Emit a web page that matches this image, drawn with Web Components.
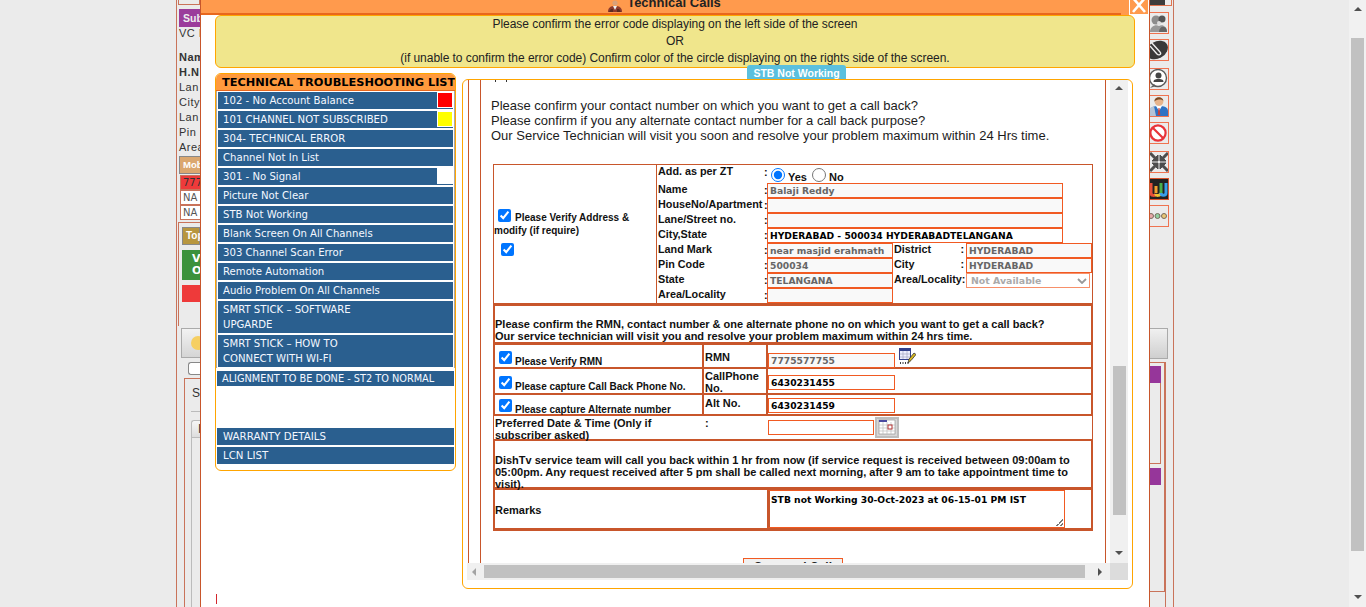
<!DOCTYPE html>
<html>
<head>
<meta charset="utf-8">
<title>Technical Calls</title>
<style>
    html, body { margin: 0; height: 100%; overflow: hidden; background: #ebebeb; }
</style>
</head>
<body>
<tech-page>
    <left-strip slot="left"></left-strip>
    <tech-modal slot="modal">
        <trouble-list slot="list">
            <trouble-item swatch="#ff0000">102 - No Account Balance</trouble-item>
            <trouble-item swatch="#ffff00">101 CHANNEL NOT SUBSCRIBED</trouble-item>
            <trouble-item>304- TECHNICAL ERROR</trouble-item>
            <trouble-item>Channel Not In List</trouble-item>
            <trouble-item swatch="#ffffff">301 - No Signal</trouble-item>
            <trouble-item>Picture Not Clear</trouble-item>
            <trouble-item>STB Not Working</trouble-item>
            <trouble-item>Blank Screen On All Channels</trouble-item>
            <trouble-item>303 Channel Scan Error</trouble-item>
            <trouble-item>Remote Automation</trouble-item>
            <trouble-item>Audio Problem On All Channels</trouble-item>
            <trouble-item>SMRT STICK – SOFTWARE<br>UPGARDE</trouble-item>
            <trouble-item>SMRT STICK – HOW TO<br>CONNECT WITH WI-FI</trouble-item>
        </trouble-list>
        <service-panel slot="panel"></service-panel>
    </tech-modal>
    <right-strip slot="right"></right-strip>
    <page-scrollbar slot="scroll"></page-scrollbar>
</tech-page>

<script>
const SANS = `"Liberation Sans", Arial, sans-serif`;
const WIDE = `"DejaVu Sans", Verdana, sans-serif`;
const LINE = "#c8562b";
const INPUT_LINE = "#f15a22";

class TechPage extends HTMLElement {
    constructor() {
        super();
        this.attachShadow({ mode: "open" });
        this.shadowRoot.innerHTML = `
            <style>
                :host {
                    display: flex;
                    width: 1366px;
                    height: 607px;
                    overflow: hidden;
                    background: #ebebeb;
                    padding-left: 176px;
                    box-sizing: border-box;
                }
                .gap { flex: 1; }
            </style>
            <slot name="left"></slot>
            <slot name="modal"></slot>
            <slot name="right"></slot>
            <div class="gap"></div>
            <slot name="scroll"></slot>
        `;
    }
}

class LeftStrip extends HTMLElement {
    constructor() {
        super();
        this.attachShadow({ mode: "open" });
        this.shadowRoot.innerHTML = `
            <style>
                :host {
                    display: block;
                    width: 24px;
                    height: 607px;
                    box-sizing: border-box;
                    border-left: 1px solid #c9735a;
                    overflow: hidden;
                    font: 11px/15px ${SANS};
                    color: #333;
                    white-space: nowrap;
                }
                .top { height: 5px; border: 1px solid #c9735a; border-top: 0; box-sizing: border-box; margin-left: 1px; }
                .sub { margin: 4px 0 0 2px; height: 18px; background: #9b3c9b; color: #eee; font-weight: bold; font-size: 10.500px; line-height: 18px; padding-left: 4px; }
                .info { padding-left: 2px; letter-spacing: .5px; margin-top: -1px; }
                .info div { height: 15px; }
                .b { font-weight: bold; }
                .mob { margin: 1px 0 0 2px; height: 18px; background: #dba76e; border: 1px solid #888; border-right: 0; box-sizing: border-box; color: #fff; font-size: 9.500px; font-weight: bold; padding-left: 3px; }
                .cell { margin: 1px 0 -1px 3px; height: 15px; box-sizing: border-box; border: 1px solid #c9735a; border-right: 0; font: 10px/13px ${WIDE}; padding-left: 2px; color: #555; background: #fff; }
                .cell.red { background: #ee3a3a; color: #333; }
                .box { margin: 3px 0 0 1px; height: 104px; border-left: 1px solid #c9735a; border-top: 1px solid #c9735a; padding: 4px 0 0 3px; box-sizing: border-box; }
                .tan { height: 18px; background: #b8963e; border: 1px solid #888; box-sizing: border-box; color: #fff; font: bold 10px/16px ${SANS}; padding-left: 3px; }
                .green { margin-top: 5px; height: 30px; background: #3c923c; color: #fff; font: bold 11px/12px ${WIDE}; padding: 3px 0 0 10px; box-sizing: border-box; }
                .redbar { margin-top: 5px; height: 17px; background: #ee3a3a; }
                .smile { margin: 2px 0 0 4px; height: 30px; border: 1px solid #aaa; border-right: 0; background: linear-gradient(#f2f2f2, #d5d5d5); box-sizing: border-box; padding: 7px 0 0 9px; }
                .smile i { display: block; width: 14px; height: 14px; border-radius: 50%; background: #f6cf62; }
                .tick { margin: 4px 0 0 11px; height: 13px; border: 1px solid #888; border-right: 0; border-radius: 3px 0 0 3px; background: #fff; box-sizing: border-box; }
                .panel { margin: 3px 0 0 7px; height: 240px; border: 1px solid #c9735a; border-right: 0; padding: 7px 0 0 7px; box-sizing: border-box; font-size: 12px; }
                .panel hr { margin: 10px 0 0 -1px; border: 0; border-top: 1px solid #bbb; }
                .tab { margin: 8px 0 0 -1px; height: 18px; border: 1px solid #bbb; border-right: 0; border-radius: 3px 0 0 0; background: linear-gradient(#f6f6f6, #ddd); font-size: 12px; line-height: 17px; padding-left: 6px; box-sizing: border-box; }
                .tabbody { margin-left: -1px; height: 180px; border-left: 1px solid #bbb; }
            </style>
            <div class="top"></div>
            <div class="sub">Sub</div>
            <div class="info">
                <div style="margin-bottom: 9px">VC I</div>
                <div class="b">Nam</div>
                <div class="b">H.N</div>
                <div>Lan</div>
                <div>City</div>
                <div>Lan</div>
                <div>Pin</div>
                <div>Area</div>
            </div>
            <div class="mob">Mob</div>
            <div class="cell red">777</div>
            <div class="cell">NA</div>
            <div class="cell">NA</div>
            <div class="box">
                <div class="tan">Top</div>
                <div class="green">V<br>O</div>
                <div class="redbar"></div>
            </div>
            <div class="smile"><i></i></div>
            <div class="tick"></div>
            <div class="panel">S<hr><div class="tab">I</div><div class="tabbody"></div></div>
        `;
    }
}

class RightStrip extends HTMLElement {
    constructor() {
        super();
        this.attachShadow({ mode: "open" });
        this.shadowRoot.innerHTML = `
            <style>
                :host {
                    display: block;
                    width: 24px;
                    height: 607px;
                    box-sizing: border-box;
                    border-right: 1px solid #c9735a;
                    overflow: hidden;
                }
                .top { height: 6px; width: 22px; background: linear-gradient(90deg, #3c3c3c 15px, #ebebeb 15px); border: 1px solid #e0734e; border-width: 0 1px 1px 0; box-sizing: border-box; }
                .ico { width: 19px; height: 22px; box-sizing: border-box; border: 1px solid #ef7350; border-left: 0; margin-top: 5px; overflow: hidden; }
                .ico svg { display: block; width: 18px; height: 20px; filter: blur(.3px); }
                .btn { margin-top: 101px; width: 18px; height: 31px; box-sizing: border-box; border: 1px solid #aaa; border-left: 0; background: linear-gradient(#f0f0f0, #cfcfcf); }
                .wrap { margin-top: 3px; width: 16px; height: 230px; box-sizing: border-box; border: 1px solid #c9735a; border-width: 1px 2px 1px 0; padding-top: 3px; }
                .purple { width: 11px; height: 17px; background: #96369a; }
                .out { width: 11px; height: 81px; box-sizing: border-box; border: 1px solid #c9735a; border-left: 0; border-top: 0; }
                .stem { width: 16px; height: 15px; border-right: 1px solid #c9735a; box-sizing: border-box; }
            </style>
            <div class="top"></div>
            <div class="ico" style="margin-top: 6px">
                <svg viewBox="0 0 18 20"><circle cx="6" cy="7" r="4.500" fill="#8d8d8d"/><circle cx="12" cy="6" r="3.500" fill="#555"/><circle cx="9" cy="10" r="2" fill="#ddd"/><path d="M0 19c0-6 6-8 9-6 3-2 8 0 8 6z" fill="#999"/><path d="M9 19c0-4 3-6 5-5 2 0 3 2 3 5z" fill="#666"/></svg>
            </div>
            <div class="ico">
                <svg viewBox="0 0 18 20"><ellipse cx="7" cy="10" rx="11.500" ry="8.500" fill="#3a3a3a" transform="rotate(-30 7 10)"/><path d="M1 2l9 10c2 2-1 4-3 2L0 6" fill="none" stroke="#eee" stroke-width="1.400"/></svg>
            </div>
            <div class="ico" style="margin-top: 7px">
                <svg viewBox="0 0 18 20"><circle cx="8" cy="9" r="8.500" fill="#fff" stroke="#5a5a5a" stroke-width="1.400"/><path d="M0 19l4-4 2 2z" fill="#5a5a5a"/><circle cx="8.500" cy="6.500" r="3" fill="#444"/><path d="M3.500 13c0-3 3-3 5-3s5 0 5 3z" fill="#444"/></svg>
            </div>
            <div class="ico">
                <svg viewBox="0 0 18 20"><path d="M0 20v-5c0-4 4-5 9-5s9 1 9 5v5z" fill="#2f72c4"/><path d="M0 20v-8l4-2 2 10z" fill="#b5c4d6"/><path d="M6 10h6l-3 5z" fill="#fff"/><path d="M8.500 12h1l.8 7h-2.600z" fill="#c9403a"/><circle cx="9" cy="5.500" r="4.400" fill="#e8b48c"/><path d="M4.400 5.500c-.6-5 8.400-6 9-.5-2-2-6-2-9 .5z" fill="#7a4a24"/></svg>
            </div>
            <div class="ico">
                <svg viewBox="0 0 18 20"><circle cx="8" cy="10" r="7.600" fill="#fff" stroke="#e8343a" stroke-width="2.200"/><path d="M2.500 4.500l11 11" stroke="#e8343a" stroke-width="2.200"/></svg>
            </div>
            <div class="ico" style="margin-top: 7px">
                <svg viewBox="0 0 18 20" fill="#4d4d4d" stroke="#4d4d4d"><path d="M8 9H2l6-6zM10 9h6l-6-6zM8 11H2l6 6zM10 11h6l-6 6z"/><path d="M0 1l5 5M18 1l-5 5M0 19l5-5M18 19l-5-5" stroke-width="3"/></svg>
            </div>
            <div class="ico" style="border-color: #d9532c; background: #222">
                <svg viewBox="0 0 18 20" fill="none" stroke-width="3"><path d="M1 4v10c0 3 4 3 5 1" stroke="#e8503a"/><path d="M5.500 15c.5 2 5 2 5.500-1" stroke="#f2c230"/><path d="M6 14V7" stroke="#f2a030"/><path d="M11 14V4" stroke="#4ab04a"/><path d="M11 14c0 3 5 3 5 0V4" stroke="#3a9ee8"/></svg>
            </div>
            <div class="ico">
                <svg viewBox="0 0 18 20" fill="none" stroke="#7a6a5a" stroke-width="1"><circle cx="1" cy="10" r="2.500" fill="#e8a8a8"/><circle cx="7.500" cy="10" r="2.500" fill="#8fd0a0"/><circle cx="14" cy="10" r="2.500" fill="#e8c878"/></svg>
            </div>
            <div class="btn"></div>
            <div class="wrap">
                <div class="purple"></div>
                <div class="out"></div>
                <div class="purple" style="margin-top: 4px"></div>
            </div>
            <div class="stem"></div>
        `;
    }
}

class PageScrollbar extends HTMLElement {
    constructor() {
        super();
        this.attachShadow({ mode: "open" });
        this.shadowRoot.innerHTML = `
            <style>
                :host {
                    display: flex;
                    flex-direction: column;
                    align-items: center;
                    width: 17px;
                    height: 607px;
                    background: #f1f1f1;
                }
                .up, .down { width: 0; height: 0; border: 4px solid transparent; }
                .up { border-top: 0; border-bottom: 4px solid #505050; margin-top: 7px; }
                .down { border-bottom: 0; border-top: 4px solid #505050; margin-top: 44px; }
                .thumb { width: 13px; height: 513px; background: #c1c1c1; margin: 27px 0 0 0; }
            </style>
            <div class="up"></div>
            <div class="thumb"></div>
            <div class="down"></div>
        `;
    }
}

class TechModal extends HTMLElement {
    constructor() {
        super();
        this.attachShadow({ mode: "open" });
        this.shadowRoot.innerHTML = `
            <style>
                :host {
                    display: block;
                    width: 950px;
                    height: 607px;
                    box-sizing: border-box;
                    background: #fff;
                    border: 1px solid ${LINE};
                    border-width: 0 1px;
                    overflow: hidden;
                    position: relative;
                }
                header {
                    display: flex;
                    height: 15px;
                    background: #ff9a4d;
                }
                .bar {
                    flex: 1;
                    margin-right: 8px;
                    border-bottom: 2px solid #e8671c;
                    display: flex;
                    justify-content: center;
                    gap: 5px;
                    overflow: hidden;
                    font: bold 13px/13px ${SANS};
                    color: #222;
                    padding-left: 7px;
                }
                .bar svg { width: 14px; height: 12px; flex: none; }
                .bar span { margin-top: -4px; }
                .close {
                    width: 20px;
                    height: 15px;
                    box-sizing: border-box;
                    border: 1px solid #fff;
                    border-top: 0;
                    overflow: hidden;
                }
                .close svg { display: block; width: 18px; height: 14px; }
                .notice {
                    margin: 0 14px;
                    height: 53px;
                    box-sizing: border-box;
                    background: #f0e68c;
                    border: 1px solid #ffa500;
                    border-radius: 6px;
                    text-align: center;
                    font: 12px/17px ${SANS};
                    letter-spacing: -.045px;
                    color: #222;
                }
                .body {
                    display: flex;
                    gap: 6px;
                    padding: 5px 14px 0;
                }
                .mark {
                    position: absolute;
                    left: 15px;
                    top: 594px;
                    width: 1px;
                    height: 10px;
                    background: #d3272c;
                }
            </style>
            <header>
                <div class="bar">
                    <svg viewBox="0 0 14 12"><circle cx="7" cy="3" r="2.600" fill="#d9a078"/><path d="M0 12c0-5 3-6 7-6s7 1 7 6z" fill="#8c3a2c"/><path d="M5 6h4l-2 4z" fill="#eee"/><path d="M1 12l2-3h2v3zM9 12v-3h2l2 3z" fill="#5a2a20"/></svg>
                    <span>Technical Calls</span>
                </div>
                <div class="close">
                    <svg viewBox="0 0 18 14"><path d="M3-2l12 14M15-2L3 12" stroke="#fff" stroke-width="2.600"/></svg>
                </div>
            </header>
            <div class="notice">
                Please confirm the error code displaying on the left side of the screen<br>
                OR<br>
                (if unable to confirm the error code) Confirm color of the circle displaying on the rights side of the screen.
            </div>
            <div class="body">
                <slot name="list"></slot>
                <slot name="panel"></slot>
            </div>
            <div class="mark"></div>
        `;
    }
}

class TroubleList extends HTMLElement {
    constructor() {
        super();
        this.attachShadow({ mode: "open" });
        this.shadowRoot.innerHTML = `
            <style>
                :host {
                    display: block;
                    width: 241px;
                    height: 398px;
                    box-sizing: border-box;
                    border: 1px solid #ffa500;
                    border-radius: 6px;
                    overflow: hidden;
                    background: #fff;
                }
                h3 {
                    margin: 0;
                    height: 17px;
                    background: #ff9a3d;
                    border-bottom: 1px solid #e8671c;
                    box-sizing: border-box;
                    font: bold 11.350px/16px ${WIDE};
                    color: #000;
                    padding-left: 6px;
                    white-space: nowrap;
                    overflow: hidden;
                }
                .items {
                    display: flex;
                    flex-direction: column;
                    gap: 2px;
                    border: 1px solid #aaa;
                    border-width: 0 1px;
                    padding: 1px 1px 0;
                    width: 239px;
                    box-sizing: border-box;
                    height: 277px;
                }
                .extra {
                    margin: 3px 0 0 1px;
                    width: 237px;
                }
                .low {
                    margin: 42px 0 0 1px;
                    display: flex;
                    flex-direction: column;
                    gap: 2px;
                    width: 237px;
                }
                .small { --item-font: 9.750px; --item-line: 13px; --item-height: 15px; --item-top: 1px; }
                .low { --item-font: 10.250px; --item-pad: 6px; }
            </style>
            <h3>TECHNICAL TROUBLESHOOTING LIST</h3>
            <div class="items"><slot></slot></div>
            <div class="extra small"><trouble-item>ALIGNMENT TO BE DONE - ST2 TO NORMAL</trouble-item></div>
            <div class="low">
                <trouble-item>WARRANTY DETAILS</trouble-item>
                <trouble-item>LCN LIST</trouble-item>
            </div>
        `;
    }
}

class TroubleItem extends HTMLElement {
    constructor() {
        super();
        this.attachShadow({ mode: "open" });
    }

    connectedCallback() {
        const swatch = this.getAttribute("swatch");
        const mark = swatch ? `<i style="background: ${swatch}"></i>` : "";
        this.shadowRoot.innerHTML = `
            <style>
                :host {
                    display: block;
                    position: relative;
                    background: #2a5f8f;
                    color: #f4f8ff;
                    font: var(--item-font, 10.150px)/var(--item-line, 15px) ${WIDE};
                    min-height: var(--item-height, 17px);
                    padding: var(--item-top, 1px) 0 0 var(--item-pad, 5px);
                    box-sizing: border-box;
                    white-space: nowrap;
                }
                :host(:not([swatch])) { padding-bottom: var(--item-top, 1px); }
                i {
                    position: absolute;
                    right: 0;
                    top: 0;
                    width: 14px;
                    height: 14px;
                    border: 1px solid #fff;
                }
            </style>
            <slot></slot>${mark}
        `;
    }
}

class FormField extends HTMLElement {
    constructor() {
        super();
        this.attachShadow({ mode: "open" });
    }

    connectedCallback() {
        const w = this.getAttribute("w") || 126;
        const h = this.getAttribute("h") || 15;
        const live = this.hasAttribute("live");
        const text = this.getAttribute("value") || "";
        this.shadowRoot.innerHTML = `
            <style>
                :host {
                    display: block;
                    width: ${w}px;
                    height: ${h}px;
                    box-sizing: border-box;
                    border: 1px solid ${INPUT_LINE};
                    background: ${live ? "#fff" : "#f9f9f9"};
                    color: ${live ? "#000" : "#666"};
                    font: bold 9.200px/13px ${WIDE};
                    padding-left: 2px;
                    white-space: nowrap;
                    overflow: hidden;
                }
            </style>${text}
        `;
    }
}

class ServicePanel extends HTMLElement {
    constructor() {
        super();
        this.attachShadow({ mode: "open" });
        this.shadowRoot.innerHTML = `
            <style>
                :host {
                    display: block;
                    position: relative;
                    width: 671px;
                    height: 510px;
                    margin-top: 6px;
                    box-sizing: border-box;
                    border: 1px solid #ffa500;
                    border-radius: 6px;
                    background: #fff;
                    font-family: ${SANS};
                }
                .tag {
                    position: absolute;
                    left: 284px;
                    top: -15px;
                    width: 99px;
                    height: 14px;
                    background: #5bc0de;
                    border-radius: 3px 3px 0 0;
                    color: #fff;
                    font: bold 10.500px/16px ${SANS};
                    text-align: center;
                }
                .frame {
                    display: grid;
                    grid-template-columns: 643px 18px;
                    grid-template-rows: 483px 17px;
                    margin-left: 4px;
                    width: 661px;
                }
                .view { overflow: hidden; }
                .outer {
                    margin-left: 1px;
                    padding-left: 11px;
                    border-left: 1px solid ${LINE};
                    height: 640px;
                }
                .inner {
                    width: 626px;
                    height: 640px;
                    box-sizing: border-box;
                    border: 1px solid ${LINE};
                    border-width: 0 1px;
                    padding-left: 10px;
                }
                .cut {
                    width: 12px;
                    height: 2px;
                    margin: 0 0 16px 4px;
                    background: linear-gradient(90deg, #333 1px, transparent 1px, transparent 11px, #333 11px);
                }
                .lead {
                    font-size: 13px;
                    line-height: 15px;
                    color: #1c1c1c;
                }
                .vbar {
                    background: #f0f0f0;
                    display: flex;
                    flex-direction: column;
                    align-items: center;
                }
                .vbar .thumb { width: 13px; height: 149px; margin-top: 276px; background: #c1c1c1; }
                .arrow-up, .arrow-down { width: 0; height: 0; border: 4px solid transparent; }
                .arrow-up { border-top: 0; border-bottom: 4px solid #505050; margin-top: 6px; }
                .arrow-down { border-bottom: 0; border-top: 4px solid #505050; margin-top: 36px; }
                .hbar {
                    background: #f0f0f0;
                    display: flex;
                    align-items: center;
                }
                .hbar .thumb { width: 601px; height: 13px; margin: 0 13px 0 8px; background: #c1c1c1; }
                .arrow-left, .arrow-right { width: 0; height: 0; border: 4px solid transparent; }
                .arrow-left { border-left: 0; border-right: 4px solid #a3a3a3; margin-left: 5px; }
                .arrow-right { border-right: 0; border-left: 4px solid #505050; }
                .corner { background: #dcdcdc; }
            </style>
            <div class="tag">STB Not Working</div>
            <div class="frame">
                <div class="view">
                    <div class="outer">
                        <div class="inner">
                            <div class="cut"></div>
                            <div class="lead">
                                Please confirm your contact number on which you want to get a call back?<br>
                                Please confirm if you any alternate contact number for a call back purpose?<br>
                                Our Service Technician will visit you soon and resolve your problem maximum within 24 Hrs time.
                            </div>
                            <address-table></address-table>
                            <contact-table></contact-table>
                        </div>
                    </div>
                </div>
                <div class="vbar">
                    <div class="arrow-up"></div>
                    <div class="thumb"></div>
                    <div class="arrow-down"></div>
                </div>
                <div class="hbar">
                    <div class="arrow-left"></div>
                    <div class="thumb"></div>
                    <div class="arrow-right"></div>
                </div>
                <div class="corner"></div>
            </div>
        `;
    }
}

class AddressTable extends HTMLElement {
    constructor() {
        super();
        this.attachShadow({ mode: "open" });
        this.shadowRoot.innerHTML = `
            <style>
                :host {
                    display: grid;
                    grid-template-columns: 163px 1fr;
                    width: 600px;
                    height: 142px;
                    margin: 21px 0 0 2px;
                    box-sizing: border-box;
                    border: 1px solid ${LINE};
                    border-bottom-width: 3px;
                    font: bold 10.800px/15px ${SANS};
                    color: #111;
                }
                .left {
                    border-right: 1px solid ${LINE};
                    display: flex;
                    flex-direction: column;
                    justify-content: center;
                    font-size: 10px;
                    line-height: 13px;
                    padding-bottom: 3px;
                }
                input[type=checkbox] { width: 13px; height: 13px; margin: 0; accent-color: #0075ff; }
                .left .a input { vertical-align: -1px; margin: 0 4px; }
                .left .b { margin: 6px 0 0 7px; height: 13px; }
                .grid {
                    display: grid;
                    grid-template-columns: 107px 2px 126px 73px 126px;
                    grid-template-rows: 18px repeat(8, 15px);
                    padding-left: 1px;
                }
                .lab { white-space: nowrap; line-height: 13px; }
                .dot { line-height: 15px; margin-left: -1px; }
                .wide { grid-column: 3 / 6; width: 296px; }
                .sub { display: flex; justify-content: space-between; padding: 0 2px 0 1px; line-height: 13px; white-space: nowrap; }
                .radios { grid-column: 3 / 6; display: flex; align-items: center; padding: 1px 0 0 4px; font-size: 11px; }
                .radios input { width: 14px; height: 14px; margin: 0 3px 0 0; accent-color: #0075ff; }
                .radios span { margin: 5px 5px 0 0; }
                .pick {
                    display: flex;
                    justify-content: space-between;
                    align-items: center;
                    width: 124px;
                    height: 15px;
                    box-sizing: border-box;
                    border: 1px solid #f7906a;
                    color: #aaa;
                    font: bold 9.400px/13px ${WIDE};
                    padding: 0 2px 0 4px;
                }
            </style>
            <div class="left">
                <div class="a"><input type="checkbox" checked>Please Verify Address &amp;<br>modify (if require)</div>
                <div class="b"><input type="checkbox" checked></div>
            </div>
            <div class="grid">
                <div class="lab">Add. as per ZT</div><div class="dot">:</div>
                <div class="radios"><input type="radio" name="zt" checked><span>Yes</span><input type="radio" name="zt"><span>No</span></div>

                <div class="lab">Name</div><div class="dot">:</div><form-field class="wide" w="296" value="Balaji Reddy"></form-field>
                <div class="lab">HouseNo/Apartment</div><div class="dot">:</div><form-field class="wide" w="296"></form-field>
                <div class="lab">Lane/Street no.</div><div class="dot">:</div><form-field class="wide" w="296"></form-field>
                <div class="lab">City,State</div><div class="dot">:</div><form-field class="wide" w="296" live value="HYDERABAD - 500034 HYDERABADTELANGANA"></form-field>

                <div class="lab">Land Mark</div><div class="dot">:</div><form-field value="near masjid erahmath"></form-field>
                <div class="sub"><span>District</span><span>:</span></div><form-field value="HYDERABAD"></form-field>

                <div class="lab">Pin Code</div><div class="dot">:</div><form-field value="500034"></form-field>
                <div class="sub"><span>City</span><span>:</span></div><form-field value="HYDERABAD"></form-field>

                <div class="lab">State</div><div class="dot">:</div><form-field value="TELANGANA"></form-field>
                <div class="sub"><span>Area/Locality</span><span>:</span></div>
                <div class="pick"><span>Not Available</span><svg width="10" height="6" viewBox="0 0 10 6"><path d="M1 1l4 4 4-4" fill="none" stroke="#999" stroke-width="1.800"/></svg></div>

                <div class="lab">Area/Locality</div><div class="dot">:</div><form-field></form-field>
            </div>
        `;
    }
}

class ContactTable extends HTMLElement {
    constructor() {
        super();
        this.attachShadow({ mode: "open" });
        this.shadowRoot.innerHTML = `
            <style>
                :host {
                    display: block;
                    width: 600px;
                    margin-left: 2px;
                    font: bold 11px/12px ${SANS};
                    color: #111;
                }
                .note {
                    box-sizing: border-box;
                    border: 2px solid ${LINE};
                    border-width: 0 2px 3px 2px;
                }
                .rmn { height: 39px; padding-top: 12px; }
                .dish { height: 50px; padding-top: 13px; border-top-width: 1px; }
                .row {
                    display: grid;
                    grid-template-columns: 207px 64px 1fr;
                    box-sizing: border-box;
                    border: 2px solid ${LINE};
                    border-width: 0 2px 2px 2px;
                }
                .row > div + div { border-left: 2px solid ${LINE}; }
                .row .lab { font-size: 10px; padding-left: 4px; }
                .row .lab input { width: 13px; height: 13px; margin: 0 3px 0 0; accent-color: #0075ff; vertical-align: 1px; }
                .row .name { padding-left: 1px; line-height: 12px; }
                .row .val { display: flex; gap: 4px; padding-left: 0; }
                .thin { border-width: 0 1px 1px 1px; }
                .thin > div + div { border: 0 !important; }
                .r1 { height: 24px; }
                .r2 { height: 26px; }
                .r3 { height: 21px; }
                .r4 { height: 24px; grid-template-columns: 208px 64px 1fr; padding-left: 1px; }
                .remarks {
                    display: grid;
                    grid-template-columns: 272px 1fr;
                    height: 41px;
                    box-sizing: border-box;
                    border: 2px solid ${LINE};
                    border-width: 0 2px 3px 2px;
                    align-items: center;
                }
                .area {
                    height: 100%;
                    width: 298px;
                    box-sizing: border-box;
                    border: 1px solid ${INPUT_LINE};
                    border-left: 3px solid ${LINE};
                    font: bold 9.200px/13px ${WIDE};
                    padding: 2px 0 0 1px;
                    position: relative;
                    color: #000;
                }
                .grip {
                    position: absolute;
                    right: 1px;
                    bottom: 1px;
                    width: 7px;
                    height: 7px;
                    background: linear-gradient(135deg, transparent 50%, #777 50%, #777 60%, transparent 60%, transparent 78%, #777 78%, #777 88%, transparent 88%);
                }
                .save {
                    margin: 27px 0 0 250px;
                    width: 100px;
                    height: 20px;
                    box-sizing: border-box;
                    border: 1px solid ${INPUT_LINE};
                    background: #f0f0f0;
                    text-align: center;
                    font: bold 12px/15px ${SANS};
                    padding-top: 1px;
                    color: #222;
                }
                .cal {
                    width: 24px;
                    height: 21px;
                    margin: -3px 0 0 -3px;
                    box-sizing: border-box;
                    border: 2px solid #bdbdbd;
                    background: #d8d8d8;
                    flex: none;
                }
                .cal svg, .edit { display: block; }
                .edit { margin-top: -5px; flex: none; }
            </style>
            <div class="note rmn">
                Please confirm the RMN, contact number &amp; one alternate phone no on which you want to get a call back?<br>
                Our service technician will visit you and resolve your problem maximum within 24 hrs time.
            </div>
            <div class="row r1">
                <div class="lab" style="padding-top: 6px"><input type="checkbox" checked>Please Verify RMN</div>
                <div class="name" style="padding-top: 6px">RMN</div>
                <div class="val" style="padding-top: 8px">
                    <form-field w="127" value="7775577755"></form-field>
                    <svg class="edit" width="17" height="17" viewBox="0 0 17 17"><rect x=".5" y=".5" width="11" height="11" fill="#eef" stroke="#33408c"/><rect x="1" y="1" width="10" height="2" fill="#33408c"/><path d="M1 6h10M1 9h10M4 3v8M8 3v8" stroke="#a8a8c0" stroke-width=".7"/><path d="M1 15h1M3.500 15h1M6 15h1M8.500 15h1" stroke="#000" stroke-width="1.600"/><path d="M9 15l1-4 5-6 2 1.500-5 6z" fill="#d8b820" stroke="#333" stroke-width=".8"/></svg>
                </div>
            </div>
            <div class="row r2">
                <div class="lab" style="padding-top: 7px"><input type="checkbox" checked>Please capture Call Back Phone No.</div>
                <div class="name" style="padding-top: 1px">CallPhone<br>No.</div>
                <div class="val" style="padding-top: 6px"><form-field w="127" live value="6430231455"></form-field></div>
            </div>
            <div class="row r3">
                <div class="lab" style="padding-top: 4px"><input type="checkbox" checked>Please capture Alternate number</div>
                <div class="name" style="padding-top: 2px">Alt No.</div>
                <div class="val" style="padding-top: 3px"><form-field w="127" live value="6430231459"></form-field></div>
            </div>
            <div class="row thin r4">
                <div style="padding-top: 1px">Preferred Date &amp; Time (Only if<br>subscriber asked)</div>
                <div style="padding-top: 1px; padding-left: 2px">:</div>
                <div class="val" style="padding: 4px 0 0 1px">
                    <form-field w="106" live></form-field>
                    <div class="cal"><svg width="20" height="17" viewBox="0 0 20 17"><rect x="2" y="1" width="16" height="14" fill="#fff" stroke="#888" stroke-width=".6"/><rect x="2" y="1" width="8" height="2" fill="#4a4aa0"/><path d="M2 6h16M2 9h16M2 12h16M6 3v12M10 3v12M14 3v12" stroke="#bbb" stroke-width=".7"/><rect x="11" y="6" width="4" height="4" fill="#fff" stroke="#b03030"/></svg></div>
                </div>
            </div>
            <div class="note dish">
                DishTv service team will call you back within 1 hr from now (if service request is received between 09:00am to 05:00pm. Any request received after 5 pm shall be called next morning, after 9 am to take appointment time to visit).
            </div>
            <div class="remarks">
                <div style="padding-top: 1px">Remarks</div>
                <div class="area">STB not Working 30-Oct-2023 at 06-15-01 PM IST<div class="grip"></div></div>
            </div>
            <div class="save">Save and Call</div>
        `;
    }
}

customElements.define("tech-page", TechPage);
customElements.define("left-strip", LeftStrip);
customElements.define("right-strip", RightStrip);
customElements.define("page-scrollbar", PageScrollbar);
customElements.define("tech-modal", TechModal);
customElements.define("trouble-item", TroubleItem);
customElements.define("trouble-list", TroubleList);
customElements.define("form-field", FormField);
customElements.define("service-panel", ServicePanel);
customElements.define("address-table", AddressTable);
customElements.define("contact-table", ContactTable);
</script>
</body>
</html>
